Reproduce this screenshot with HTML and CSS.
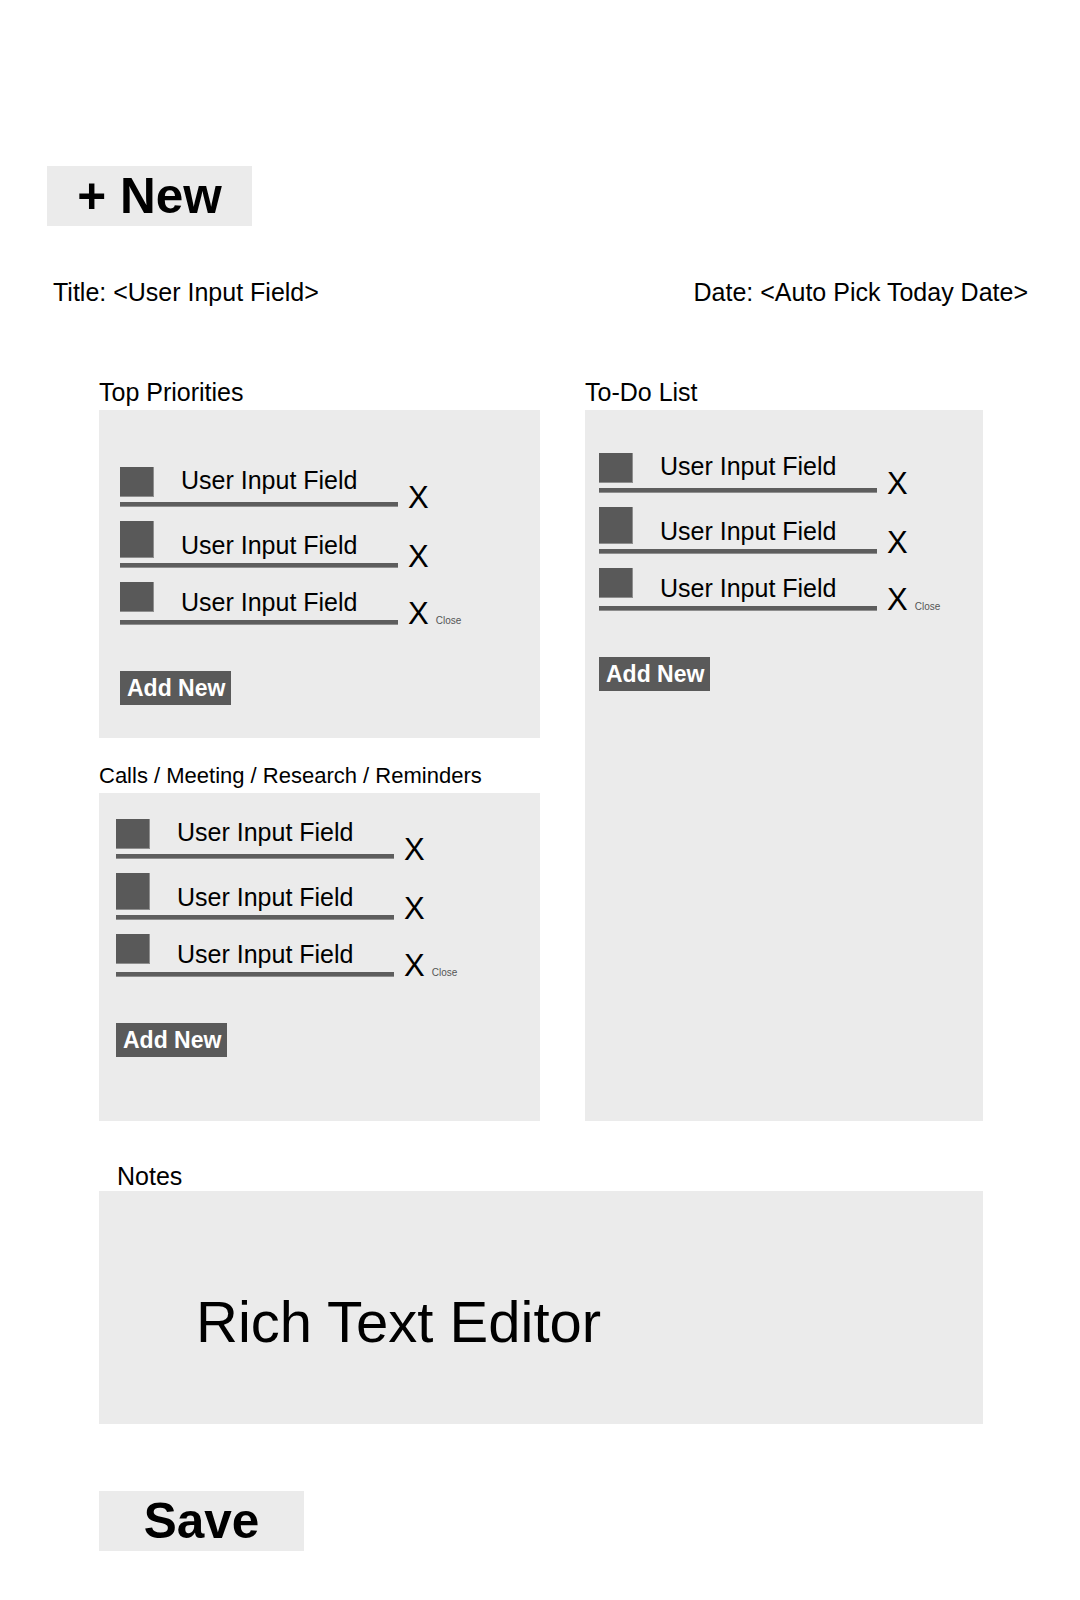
FILE: index.html
```html
<!DOCTYPE html>
<html lang="en">
<head>
<meta charset="utf-8">
<title>New Entry</title>
<link rel="stylesheet" href="styles.css">
</head>
<body>
<div class="page">
  <div class="btn-light btn-new">+ New</div>

  <div class="header">
    <span>Title: &lt;User Input Field&gt;</span>
    <span>Date: &lt;Auto Pick Today Date&gt;</span>
  </div>

  <div class="grid">
    <div class="col">
      <div class="label">Top Priorities</div>
      <div class="panel panel-top">
        <div class="rows">
          <div class="row">
            <div class="field">
              <div class="field-top"><span class="box"></span><span class="text">User Input Field</span></div>
              <div class="line"></div>
            </div>
            <span class="x">X</span>
          </div>
          <div class="row">
            <div class="field">
              <div class="field-top"><span class="box tall"></span><span class="text">User Input Field</span></div>
              <div class="line"></div>
            </div>
            <span class="x">X</span>
          </div>
          <div class="row">
            <div class="field">
              <div class="field-top"><span class="box lifted"></span><span class="text">User Input Field</span></div>
              <div class="line"></div>
            </div>
            <span class="x">X<span class="close">Close</span></span>
          </div>
        </div>
        <div class="btn-add">Add New</div>
      </div>

      <div class="label label-sm">Calls / Meeting / Research / Reminders</div>
      <div class="panel panel-calls">
        <div class="rows">
          <div class="row">
            <div class="field">
              <div class="field-top"><span class="box"></span><span class="text">User Input Field</span></div>
              <div class="line"></div>
            </div>
            <span class="x">X</span>
          </div>
          <div class="row">
            <div class="field">
              <div class="field-top"><span class="box tall"></span><span class="text">User Input Field</span></div>
              <div class="line"></div>
            </div>
            <span class="x">X</span>
          </div>
          <div class="row">
            <div class="field">
              <div class="field-top"><span class="box lifted"></span><span class="text">User Input Field</span></div>
              <div class="line"></div>
            </div>
            <span class="x">X<span class="close">Close</span></span>
          </div>
        </div>
        <div class="btn-add">Add New</div>
      </div>
    </div>

    <div class="col">
      <div class="label">To-Do List</div>
      <div class="panel panel-todo">
        <div class="rows">
          <div class="row">
            <div class="field">
              <div class="field-top"><span class="box"></span><span class="text">User Input Field</span></div>
              <div class="line"></div>
            </div>
            <span class="x">X</span>
          </div>
          <div class="row">
            <div class="field">
              <div class="field-top"><span class="box tall"></span><span class="text">User Input Field</span></div>
              <div class="line"></div>
            </div>
            <span class="x">X</span>
          </div>
          <div class="row">
            <div class="field">
              <div class="field-top"><span class="box lifted"></span><span class="text">User Input Field</span></div>
              <div class="line"></div>
            </div>
            <span class="x">X<span class="close">Close</span></span>
          </div>
        </div>
        <div class="btn-add">Add New</div>
      </div>
    </div>
  </div>

  <div class="notes">
    <div class="label notes-label">Notes</div>
    <div class="panel panel-notes">
      <div class="rte">Rich Text Editor</div>
    </div>
  </div>

  <div class="btn-light btn-save">Save</div>
</div>
</body>
</html>
```

FILE: styles.css
```css
* {
  box-sizing: border-box;
}

html, body {
  margin: 0;
  padding: 0;
  background: #ffffff;
}

body {
  font-family: "Liberation Sans", Arial, sans-serif;
  color: #000;
}

.page {
  padding-top: 166px;
  width: 1080px;
}

.btn-light {
  width: 205px;
  height: 60px;
  background: #ebebeb;
  font-weight: bold;
  text-align: center;
}

.btn-new {
  margin-left: 47px;
  font-size: 49.5px;
  line-height: 60px;
}

.header {
  margin-top: 52px;
  padding: 0 52px 0 53px;
  display: flex;
  justify-content: space-between;
  font-size: 25px;
  line-height: 28px;
  color: #000;
}

.grid {
  margin-top: 72px;
  margin-left: 99px;
  display: grid;
  grid-template-columns: 441px 398px;
  column-gap: 45px;
}

.col {
  display: flex;
  flex-direction: column;
}

.label {
  font-size: 25px;
  line-height: 28px;
  margin-bottom: 4px;
  color: #000;
}

.label-sm {
  font-size: 22px;
  line-height: 26px;
  margin-top: 25px;
}

.panel {
  background: #ebebeb;
}

.panel-top {
  height: 328px;
  padding: 57px 0 0 21px;
}

.panel-calls {
  height: 328px;
  padding: 26px 0 0 17px;
}

.panel-todo {
  flex: 1;
  padding: 43px 0 0 14px;
}

.rows {
  display: flex;
  flex-direction: column;
  gap: 14px;
}

.row {
  display: flex;
  align-items: flex-end;
}

.field {
  width: 278px;
  display: flex;
  flex-direction: column;
}

.field-top {
  display: flex;
  align-items: flex-end;
}

.box {
  width: 34px;
  height: 30px;
  background: #595959;
  border-right: 1px solid #8e8e8e;
  border-bottom: 1px solid #8e8e8e;
}

.box.tall {
  height: 37px;
}

.box.lifted {
  margin-bottom: 3px;
}

.text {
  margin-left: 27px;
  font-size: 25px;
  line-height: 25px;
  color: #000;
  white-space: nowrap;
}

.row:first-child .text {
  margin-bottom: 4px;
}

.line {
  margin-top: 5px;
  height: 5px;
  background: #5d5d5d;
  border-bottom: 1px solid #8e8e8e;
}

.x {
  margin-left: 10px;
  font-size: 31px;
  line-height: 22px;
  color: #000;
  white-space: nowrap;
}

.row:first-child .x {
  margin-bottom: -2px;
}

.close {
  margin-left: 7px;
  font-size: 10px;
  line-height: 0;
  color: #555;
}

.btn-add {
  margin-top: 46px;
  width: 111px;
  height: 34px;
  padding-left: 7px;
  background: #5a5a5a;
  color: #fff;
  font-weight: bold;
  font-size: 23px;
  line-height: 34px;
  white-space: nowrap;
}

.notes {
  margin-top: 41px;
  margin-left: 99px;
  width: 884px;
}

.notes-label {
  padding-left: 18px;
  margin-bottom: 1px;
}

.panel-notes {
  height: 233px;
  padding: 99px 0 0 97px;
}

.rte {
  font-size: 58px;
  line-height: 64px;
  color: #000;
}

.btn-save {
  margin-top: 67px;
  margin-left: 99px;
  font-size: 49.5px;
  line-height: 60px;
}
```
